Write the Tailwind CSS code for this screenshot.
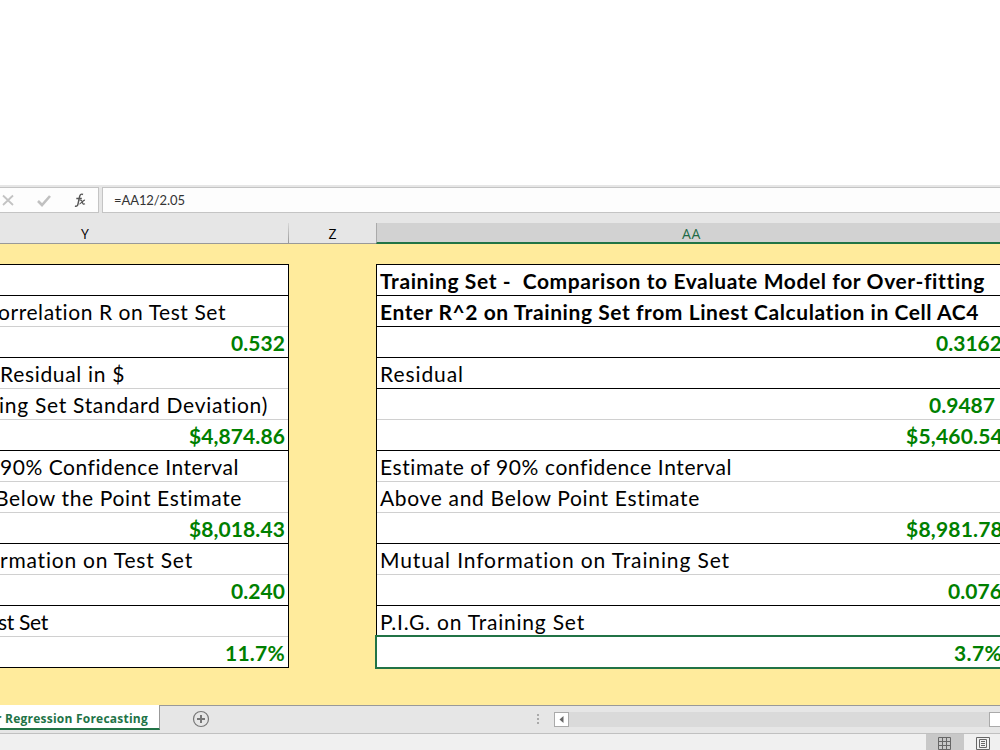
<!DOCTYPE html>
<html lang="en">
<head>
<meta charset="utf-8">
<title>Regression Forecasting</title>
<script src="https://cdn.jsdelivr.net/npm/@tailwindcss/browser@4"></script>
</head>
<body class="w-[1000px] h-[750px] overflow-hidden bg-white font-['Lato','Noto_Sans',sans-serif] text-black">
<div class="flex h-[750px] w-[1000px] flex-col overflow-hidden pt-[185px]">
  <!-- formula bar -->
  <div class="flex h-[38px] shrink-0 bg-[#e6e6e6] pt-[2px]">
    <div class="flex h-[26px] w-[99px] items-center border border-l-0 border-[#c4c4c4] bg-[#fdfdfd]">
      <svg class="h-6 w-[98px]" viewBox="0 0 98 24" fill="none">
        <path d="M3 7.5L13 17M13 7.5L3 17" stroke="#c3c3c3" stroke-width="1.8"/>
        <path d="M38 13l4 4 8-9" stroke="#c0c0c0" stroke-width="2.6"/>
        <path d="M83 6.5c-2-1-3 .3-3.500 2.500l-1.500 7c-.4 2-1.500 2.700-3 2M76.300 10.500h5.500" stroke="#555" stroke-width="1.400"/>
        <path d="M79.500 12.300c2-.8 2.300.5 2.800 2 .5 1.600 1 2.200 2.700 1.400M85 12.200c-1.700-.4-4.300 4.200-5.500 3.600" stroke="#555" stroke-width="1.200"/>
      </svg>
    </div>
    <div class="ml-[3px] flex h-[26px] flex-1 items-center border border-r-0 border-[#c4c4c4] bg-[#fdfdfd] pt-[2px] pl-[11px] text-[13px] text-[#333]"><span data-w="71">=AA12/2.05</span></div>
  </div>
  <!-- column headings -->
  <div class="flex h-[21px] shrink-0 bg-[#e6e6e6] font-['Open_Sans',sans-serif] text-[14px] leading-[21px]">
    <div class="flex w-[289px] border-b border-[#999]"><span class="w-[170px] text-center">Y</span><span class="ml-auto w-px bg-linear-to-b from-[#d8d8d8] to-[#999]"></span></div>
    <div class="w-[87px] border-b border-[#999] text-center">Z</div>
    <div class="flex-1 border-b-2 border-l border-b-[#217346] border-l-[#aaa] bg-[#d2d2d2] pl-[305px] text-[#1e6b47]"><span data-w="19">AA</span></div>
  </div>
  <!-- sheet -->
  <div class="flex h-[461px] shrink-0 bg-[#ffeb9c] pt-5 text-[21px] leading-[31px] whitespace-nowrap">
    <div class="h-[404px] w-[289px] overflow-hidden border-y border-r border-black bg-white *:h-[31px] *:border-b *:border-[#d0d0d0]">
      <div class="border-black!"></div>
      <div><span class="-ml-[2px]" data-w="228">orrelation R on Test Set</span></div>
      <div class="border-black! pr-[3px] text-right font-bold text-[#008000]"><span data-w="54">0.532</span></div>
      <div><span data-w="125">Residual in $</span></div>
      <div><span class="-ml-px" data-w="269">ing Set Standard Deviation)</span></div>
      <div class="border-black! pr-[3px] text-right font-bold text-[#008000]"><span data-w="96">$4,874.86</span></div>
      <div><span data-w="239">90% Confidence Interval</span></div>
      <div><span class="-ml-[5px]" data-w="247">Below the Point Estimate</span></div>
      <div class="border-black! pr-[3px] text-right font-bold text-[#008000]"><span data-w="96">$8,018.43</span></div>
      <div><span data-w="193">rmation on Test Set</span></div>
      <div class="border-black! pr-[3px] text-right font-bold text-[#008000]"><span data-w="54">0.240</span></div>
      <div><span class="-ml-[2px]" data-w="50">st Set</span></div>
      <div class="border-b-0! pr-[3px] text-right font-bold text-[#008000]"><span data-w="60">11.7%</span></div>
    </div>
    <div class="ml-[87px] h-[404px] flex-1 overflow-hidden border-y border-l border-black bg-white *:h-[31px] *:border-b *:border-[#d0d0d0]">
      <div class="border-black! pl-[3px] font-bold"><span data-w="605">Training Set -&nbsp; Comparison to Evaluate Model for Over-fitting</span></div>
      <div class="border-black! pl-[3px] font-bold"><span data-w="599">Enter R^2 on Training Set from Linest Calculation in Cell AC4</span></div>
      <div class="border-black! pl-[559px] font-bold text-[#008000]"><span data-w="66">0.3162</span></div>
      <div class="border-black! pl-[3px]"><span data-w="84">Residual</span></div>
      <div class="pl-[552px] font-bold text-[#008000]"><span data-w="66">0.9487</span></div>
      <div class="border-black! pl-[529px] font-bold text-[#008000]"><span data-w="97">$5,460.54</span></div>
      <div class="pl-[3px]"><span data-w="352">Estimate of 90% confidence Interval</span></div>
      <div class="pl-[3px]"><span data-w="320">Above and Below Point Estimate</span></div>
      <div class="border-black! pl-[529px] font-bold text-[#008000]"><span data-w="97">$8,981.78</span></div>
      <div class="pl-[3px]"><span data-w="350">Mutual Information on Training Set</span></div>
      <div class="border-black! pl-[571px] font-bold text-[#008000]"><span data-w="54">0.076</span></div>
      <div class="pl-[3px]"><span data-w="205">P.I.G. on Training Set</span></div>
      <div class="border-b-0! pl-[577px] font-bold text-[#008000]"><span data-w="48">3.7%</span></div>
    </div>
    <!-- active cell outline -->
    <div class="absolute top-[635px] left-[375px] h-[34px] w-[640px] border-2 border-[#217346]"></div>
  </div>
  <!-- sheet tabs -->
  <div class="flex h-[28px] shrink-0 border-t border-[#999] bg-[#e6e6e6]">
    <div class="-mt-px h-[25px] w-[160px] border-r border-b-2 border-r-[#999] border-b-[#217346] bg-white font-['Open_Sans',sans-serif] text-[12px] leading-[27px] font-bold whitespace-nowrap text-[#217346]"><span class="-ml-[4px]" data-w="152">r Regression Forecasting</span></div>
    <svg class="mt-[4px] ml-[32px] size-[18px]" viewBox="0 0 18 18" fill="none" stroke="#777"><circle cx="9" cy="9" r="7.500" stroke-width="1.200"/><path d="M9 5v8M5 9h8" stroke-width="2"/></svg>
    <div class="mt-[8px] ml-[327px] flex w-[2px] flex-col gap-[2px] *:size-[2px] *:bg-[#aaa]"><i></i><i></i><i></i></div>
    <div class="mt-[6px] ml-[15px] flex h-[15px] flex-1 bg-[#dadada]">
      <div class="size-[15px] border border-[#aaa] bg-white"><svg class="size-[13px]" viewBox="0 0 13 13"><path d="M8.500 3v7L4.500 6.500z" fill="#666"/></svg></div>
      <div class="ml-auto w-[11px] border border-r-0 border-[#aaa] bg-white"></div>
    </div>
  </div>
  <!-- status bar -->
  <div class="flex h-[17px] shrink-0 border-t border-[#c0c0c0] bg-[#f0f0f0]">
    <div class="ml-[926px] w-[38px] bg-[#c8c8c8]"><svg class="ml-3 mt-[3px] h-[13px] w-[13px]" viewBox="0 0 13 13" fill="none" stroke="#666"><path d="M.5.5h12v12H.5zM4.500.5v12M8.500.5v12M.5 4.500h12M.5 8.500h12"/></svg></div>
    <svg class="mt-[3px] ml-3 h-[13px] w-[14px]" viewBox="0 0 14 13" fill="none" stroke="#666"><path d="M.5.5h13v12H.5zM3.500 2.500h7v8h-7zM5 4.500h4M5 6.500h4M5 8.500h4"/></svg>
  </div>
</div>
<script>
  // Track each label out to its cell's text width.
  function fitLabels() {
    document.querySelectorAll('[data-w]').forEach(function (el) {
      el.style.display = 'inline-block';
      el.style.whiteSpace = 'nowrap';
      el.style.fontVariantLigatures = 'none';
      el.style.letterSpacing = '0px';
      var range = document.createRange();
      range.selectNodeContents(el);
      var diff = Number(el.dataset.w) - range.getBoundingClientRect().width;
      el.style.letterSpacing = diff / el.textContent.length + 'px';
    });
  }
  fitLabels();
  window.addEventListener('load', function () {
    fitLabels();
    document.fonts.ready.then(fitLabels);
    requestAnimationFrame(fitLabels);
  });
</script>
</body>
</html>
